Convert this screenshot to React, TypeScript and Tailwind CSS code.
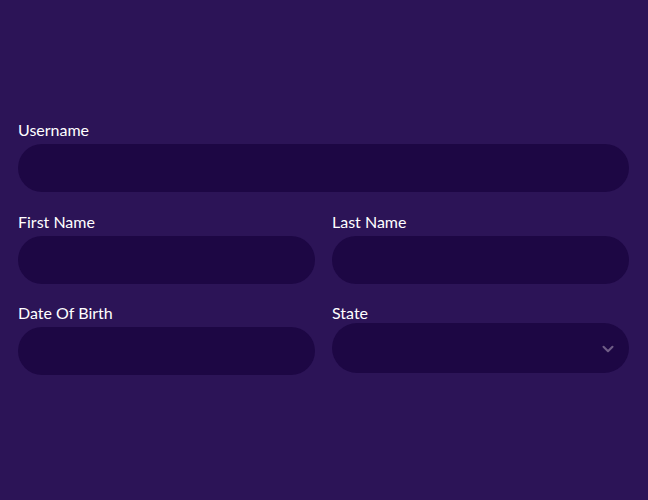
import { ChevronDown } from "lucide-react";

function Field({ label, className = "" }: { label: string; className?: string }) {
  return (
    <div className={`flex flex-col ${className}`}>
      <label className="text-[16px] leading-[22px] text-white">{label}</label>
      <input className="mt-[3px] h-[48px] w-full rounded-full bg-[#1d0744] px-5 text-[15px] text-white outline-none" />
    </div>
  );
}

export default function App() {
  return (
    <div
      className="min-h-[500px] w-full bg-[#2c1457] px-[18px] pt-[119px]"
      style={{ fontFamily: "Lato, 'Open Sans', sans-serif" }}
    >
      <form className="flex w-[611px] flex-col">
        <Field label="Username" />
        <div className="mt-[19px] grid grid-cols-2 gap-x-[17px]">
          <Field label="First Name" />
          <Field label="Last Name" />
        </div>
        <div className="mt-[18px] grid grid-cols-2 gap-x-[17px]">
          <Field label="Date Of Birth" />
          <div className="flex flex-col">
            <label className="text-[16px] leading-[22px] text-white">State</label>
            <div className="relative -mt-px">
              <select className="h-[50px] w-full appearance-none rounded-full bg-[#1d0744] px-5 text-[15px] text-white outline-none">
                <option></option>
              </select>
              <ChevronDown
                size={18}
                strokeWidth={2.75}
                className="pointer-events-none absolute right-[12px] top-[17px] text-[#6f5d86]"
              />
            </div>
          </div>
        </div>
      </form>
    </div>
  );
}
